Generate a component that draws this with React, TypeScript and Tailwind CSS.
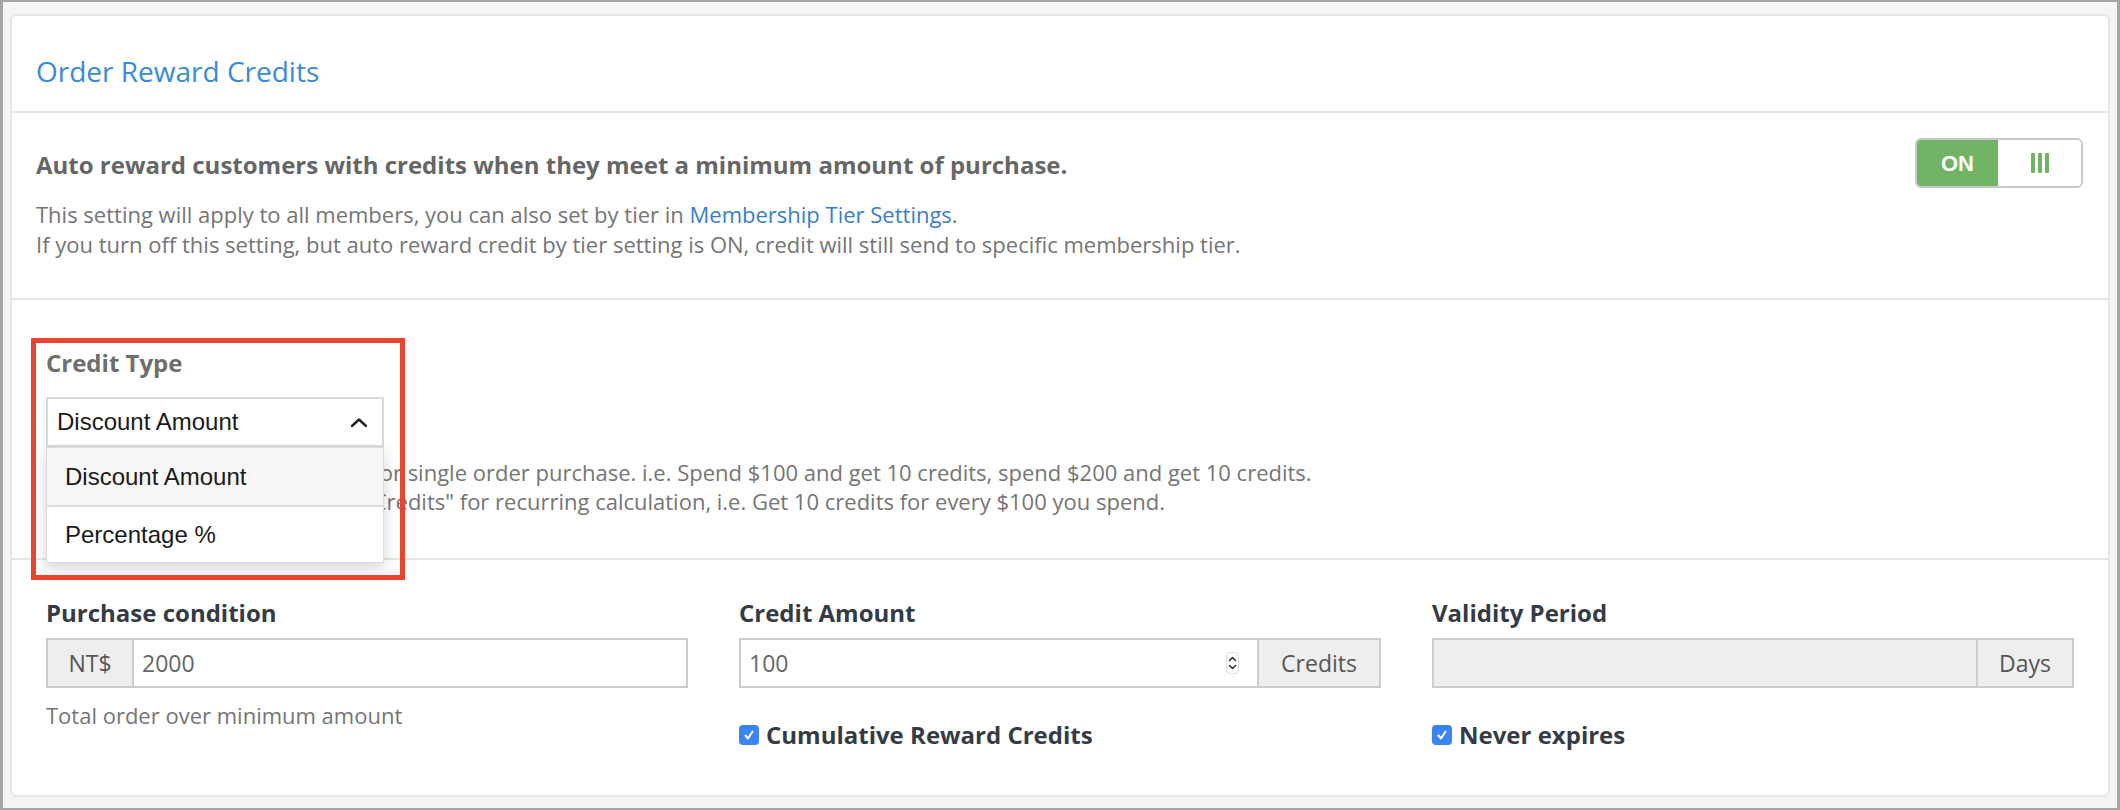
import React from "react";

function Toggle() {
  return (
    <div className="flex h-[50px] w-[168px] overflow-hidden rounded-[6px] border-2 border-[#c9c9c9]">
      <div className="flex w-[81px] items-center justify-center bg-[#72b465] font-['Liberation_Sans',Arial,sans-serif] text-[22px] font-bold text-white">ON</div>
      <div className="flex flex-1 items-center justify-center gap-[3px] bg-white">
        <span className="h-[20px] w-[4px] rounded-[1px] bg-[#72b465]" />
        <span className="h-[20px] w-[4px] rounded-[1px] bg-[#72b465]" />
        <span className="h-[20px] w-[4px] rounded-[1px] bg-[#72b465]" />
      </div>
    </div>
  );
}

function Spinner() {
  return (
    <svg width="13" height="22" viewBox="0 0 13 22" className="shrink-0">
      <rect x="0.5" y="0.5" width="12" height="21" rx="4" fill="#fff" stroke="#dcdcdc" />
      <path d="M3.5 8.5 L6.5 5.5 L9.5 8.5" fill="none" stroke="#333" strokeWidth="1.6" strokeLinecap="round" strokeLinejoin="round" />
      <path d="M3.5 13.5 L6.5 16.5 L9.5 13.5" fill="none" stroke="#333" strokeWidth="1.6" strokeLinecap="round" strokeLinejoin="round" />
    </svg>
  );
}

function Checkbox() {
  return (
    <span className="flex h-[20px] w-[20px] shrink-0 items-center justify-center rounded-[4px] bg-[#3b84f3]">
      <svg width="12" height="12" viewBox="0 0 12 12">
        <path d="M2.5 6.5 L5 9.5 L9.5 2.5" fill="none" stroke="#fff" strokeWidth="2" strokeLinecap="round" strokeLinejoin="round" />
      </svg>
    </span>
  );
}

function Addon({ children, className }: { children: React.ReactNode; className: string }) {
  return (
    <div className={"flex shrink-0 items-center justify-center bg-[#eeeeee] text-[23px] text-[#555] " + className}>{children}</div>
  );
}

export default function App() {
  return (
    <div className="h-[810px] w-[2120px] border-x-[3px] border-y-2 border-[#a6a6a6] bg-[#f5f5f5] pl-[7px] pr-[7px] pt-[12px] font-['Open_Sans',sans-serif]">
      <div className="h-[783px] rounded-[6px] border-2 border-[#e6e6e6] bg-white">
        {/* header */}
        <div className="h-[97px] border-b-2 border-[#e6e6e6] px-[24px] pt-[36px]">
          <h1 className="text-[28px] leading-[38px] text-[#3a8ad8]">Order Reward Credits</h1>
        </div>

        {/* auto reward */}
        <div className="flex h-[187px] justify-between border-b-2 border-[#e6e6e6] pl-[24px] pr-[25px]">
          <div className="pt-[36px]">
            <p className="text-[24px] font-bold leading-[32px] text-[#666]">
              Auto reward customers with credits when they meet a minimum amount of purchase.
            </p>
            <p className="mt-[18px] text-[22px] leading-[30px] text-[#757575]">
              This setting will apply to all members, you can also set by tier in{" "}
              <a className="text-[#3b7ec8]">Membership Tier Settings</a>.
              <br />
              If you turn off this setting, but auto reward credit by tier setting is ON, credit will still send to specific membership tier.
            </p>
          </div>
          <div className="mt-[25px]">
            <Toggle />
          </div>
        </div>

        {/* credit type */}
        <div className="h-[260px] border-b-2 border-[#e6e6e6] px-[34px] pt-[48px]">
          <div className="relative w-[338px]">
            <div className="pointer-events-none absolute left-[-15px] top-[-10px] z-20 h-[242px] w-[374px] border-[5px] border-[#e9452e]" />
            <label className="block text-[24px] font-bold leading-[30px] text-[#6e6e6e]">Credit Type</label>
            <div className="relative mt-[19px]">
              <div className="flex h-[50px] items-center justify-between border-2 border-[#dadada] bg-white pl-[9px] pr-[14px] font-['Liberation_Sans',Arial,sans-serif] text-[24px] text-[#1a1a1a]">
                <span>Discount Amount</span>
                <svg width="18" height="11" viewBox="0 0 18 11">
                  <path d="M2 9 L9 2.5 L16 9" fill="none" stroke="#222" strokeWidth="2.4" strokeLinecap="round" strokeLinejoin="round" />
                </svg>
              </div>
              <div className="absolute left-0 top-[50px] z-10 w-[338px] border border-[#dcdcdc] bg-white font-['Liberation_Sans',Arial,sans-serif] text-[24px] text-[#1a1a1a] shadow-[0_6px_14px_rgba(0,0,0,0.16)]">
                <div className="flex h-[57px] items-center bg-[#f7f7f7] pl-[18px]">Discount Amount</div>
                <div className="flex h-[57px] items-center border-t-2 border-[#dedede] pl-[18px]">Percentage %</div>
              </div>
            </div>
          </div>
          <p className="mt-[11px] text-[22px] leading-[29px] text-[#757575]">
            Unchecked "Cumulative Credit" for single order purchase. i.e. Spend $100 and get 10 credits, spend $200 and get 10 credits.
            <br />
            Please tick "Cumulative Reward Credits" for recurring calculation, i.e. Get 10 credits for every $100 you spend.
          </p>
        </div>

        {/* conditions */}
        <div className="grid grid-cols-3 gap-x-[51px] px-[34px] pt-[38px]">
          <div>
            <label className="block text-[24px] font-bold leading-[30px] text-[#353b45]">Purchase condition</label>
            <div className="mt-[10px] flex h-[50px] border-2 border-[#cccccc]">
              <Addon className="w-[86px] border-r-2 border-[#cccccc]">NT$</Addon>
              <input readOnly defaultValue="2000" className="min-w-0 flex-1 bg-white pl-[8px] text-[23px] text-[#666] outline-none" />
            </div>
            <p className="mt-[12px] text-[22px] leading-[30px] text-[#757575]">Total order over minimum amount</p>
          </div>

          <div>
            <label className="block text-[24px] font-bold leading-[30px] text-[#353b45]">Credit Amount</label>
            <div className="mt-[10px] flex h-[50px] border-2 border-[#cccccc]">
              <div className="flex min-w-0 flex-1 items-center bg-white pl-[8px] pr-[18px]">
                <input readOnly defaultValue="100" className="min-w-0 flex-1 text-[23px] text-[#666] outline-none" />
                <Spinner />
              </div>
              <Addon className="w-[122px] border-l-2 border-[#cccccc]">Credits</Addon>
            </div>
            <div className="mt-[32px] flex items-center gap-[7px]">
              <Checkbox />
              <span className="text-[24px] font-bold leading-[30px] text-[#353b45]">Cumulative Reward Credits</span>
            </div>
          </div>

          <div>
            <label className="block text-[24px] font-bold leading-[30px] text-[#353b45]">Validity Period</label>
            <div className="mt-[10px] flex h-[50px] border-2 border-[#cccccc] bg-[#eeeeee]">
              <input readOnly disabled className="min-w-0 flex-1 bg-[#eeeeee] outline-none" />
              <Addon className="w-[96px] border-l-2 border-[#cccccc]">Days</Addon>
            </div>
            <div className="mt-[32px] flex items-center gap-[7px]">
              <Checkbox />
              <span className="text-[24px] font-bold leading-[30px] text-[#353b45]">Never expires</span>
            </div>
          </div>
        </div>
      </div>
    </div>
  );
}
